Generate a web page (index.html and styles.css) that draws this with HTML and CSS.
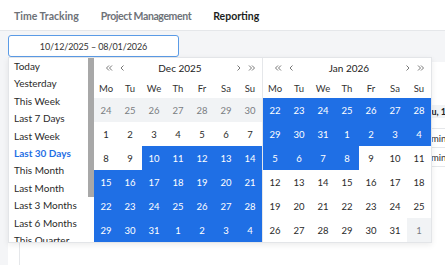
FILE: index.html
```html
<!DOCTYPE html>
<html lang="en">
<head>
<meta charset="utf-8">
<title>Reporting</title>
<link rel="stylesheet" href="styles.css">
</head>
<body>
<nav class="tabs">
  <span class="tab">Time Tracking</span>
  <span class="tab tab-wide">Project Management</span>
  <span class="tab active">Reporting</span>
</nav>
<main class="content">
  <div class="picker">
    <div class="date-input">10/12/2025 – 08/01/2026</div>
    <div class="dropdown">
      <div class="presets">
        <div class="preset">Today</div>
        <div class="preset">Yesterday</div>
        <div class="preset">This Week</div>
        <div class="preset">Last 7 Days</div>
        <div class="preset">Last Week</div>
        <div class="preset selected">Last 30 Days</div>
        <div class="preset">This Month</div>
        <div class="preset">Last Month</div>
        <div class="preset">Last 3 Months</div>
        <div class="preset">Last 6 Months</div>
        <div class="preset">This Quarter</div>
      </div>
      <div class="scrollbar"><div class="thumb"></div></div>
      <div class="calendar">
        <div class="cal-head">
          <span class="nav-btn"><svg width="8" height="8" viewBox="0 0 8 8"><path d="M4 1.5 1.5 4 4 6.5M7 1.5 4.5 4 7 6.5" fill="none" stroke="#777" stroke-width="1"/></svg></span>
          <span class="nav-btn"><svg width="8" height="8" viewBox="0 0 8 8"><path d="M5.5 1.5 3 4 5.5 6.5" fill="none" stroke="#777" stroke-width="1"/></svg></span>
          <span class="cal-title">Dec 2025</span>
          <span class="nav-btn"><svg width="8" height="8" viewBox="0 0 8 8"><path d="M2.5 1.5 5 4 2.5 6.5" fill="none" stroke="#777" stroke-width="1"/></svg></span>
          <span class="nav-btn"><svg width="8" height="8" viewBox="0 0 8 8"><path d="M1 1.5 3.5 4 1 6.5M4 1.5 6.5 4 4 6.5" fill="none" stroke="#777" stroke-width="1"/></svg></span>
        </div>
        <div class="grid">
          <span class="wd">Mo</span><span class="wd">Tu</span><span class="wd">We</span><span class="wd">Th</span><span class="wd">Fr</span><span class="wd">Sa</span><span class="wd">Su</span>
          <span class="day muted">24</span><span class="day muted">25</span><span class="day muted">26</span><span class="day muted">27</span><span class="day muted">28</span><span class="day muted">29</span><span class="day muted">30</span>
          <span class="day">1</span><span class="day">2</span><span class="day">3</span><span class="day">4</span><span class="day">5</span><span class="day">6</span><span class="day">7</span>
          <span class="day">8</span><span class="day">9</span><span class="day range">10</span><span class="day range">11</span><span class="day range">12</span><span class="day range">13</span><span class="day range">14</span>
          <span class="day range">15</span><span class="day range">16</span><span class="day range">17</span><span class="day range">18</span><span class="day range">19</span><span class="day range">20</span><span class="day range">21</span>
          <span class="day range">22</span><span class="day range">23</span><span class="day range">24</span><span class="day range">25</span><span class="day range">26</span><span class="day range">27</span><span class="day range">28</span>
          <span class="day range">29</span><span class="day range">30</span><span class="day range">31</span><span class="day range">1</span><span class="day range">2</span><span class="day range">3</span><span class="day range">4</span>
        </div>
      </div>
      <div class="calendar second">
        <div class="cal-head">
          <span class="nav-btn"><svg width="8" height="8" viewBox="0 0 8 8"><path d="M4 1.5 1.5 4 4 6.5M7 1.5 4.5 4 7 6.5" fill="none" stroke="#777" stroke-width="1"/></svg></span>
          <span class="nav-btn"><svg width="8" height="8" viewBox="0 0 8 8"><path d="M5.5 1.5 3 4 5.5 6.5" fill="none" stroke="#777" stroke-width="1"/></svg></span>
          <span class="cal-title">Jan 2026</span>
          <span class="nav-btn"><svg width="8" height="8" viewBox="0 0 8 8"><path d="M2.5 1.5 5 4 2.5 6.5" fill="none" stroke="#777" stroke-width="1"/></svg></span>
          <span class="nav-btn"><svg width="8" height="8" viewBox="0 0 8 8"><path d="M1 1.5 3.5 4 1 6.5M4 1.5 6.5 4 4 6.5" fill="none" stroke="#777" stroke-width="1"/></svg></span>
        </div>
        <div class="grid">
          <span class="wd">Mo</span><span class="wd">Tu</span><span class="wd">We</span><span class="wd">Th</span><span class="wd">Fr</span><span class="wd">Sa</span><span class="wd">Su</span>
          <span class="day range">22</span><span class="day range">23</span><span class="day range">24</span><span class="day range">25</span><span class="day range">26</span><span class="day range">27</span><span class="day range">28</span>
          <span class="day range">29</span><span class="day range">30</span><span class="day range">31</span><span class="day range">1</span><span class="day range">2</span><span class="day range">3</span><span class="day range">4</span>
          <span class="day range">5</span><span class="day range">6</span><span class="day range">7</span><span class="day range">8</span><span class="day">9</span><span class="day">10</span><span class="day">11</span>
          <span class="day">12</span><span class="day">13</span><span class="day">14</span><span class="day">15</span><span class="day">16</span><span class="day">17</span><span class="day">18</span>
          <span class="day">19</span><span class="day">20</span><span class="day">21</span><span class="day">22</span><span class="day">23</span><span class="day">24</span><span class="day">25</span>
          <span class="day">26</span><span class="day">27</span><span class="day">28</span><span class="day">29</span><span class="day">30</span><span class="day">31</span><span class="day muted">1</span>
        </div>
      </div>
    </div>
  </div>
  <section class="card">
    <div class="report">
      <div class="rep-head">Thu, 1</div>
      <div class="rep-sub"></div>
      <div class="rep-row">0 min</div>
      <div class="rep-row">0 min</div>
    </div>
    <div class="card-foot"></div>
  </section>
</main>
</body>
</html>
```

FILE: styles.css
```css
* { box-sizing: border-box; }

html, body {
  margin: 0;
  width: 445px;
  height: 265px;
  overflow: hidden;
}

body {
  background: #f4f5f7;
  font-family: Lato, "Noto Sans", sans-serif;
  color: #222;
}

.tabs {
  height: 31px;
  background: #fff;
  border-bottom: 1px solid #e5e7ea;
  display: flex;
  align-items: center;
  gap: 22px;
  padding: 1px 0 0 14px;
  font-size: 10.5px;
  font-weight: 700;
  color: #6e7278;
}

.tab-wide {
  letter-spacing: -0.4px;
}

.tab.active {
  color: #1d1f22;
}

.content {
  padding: 4px 8px 0;
  display: flex;
  flex-direction: column;
  gap: 5px;
}

.picker {
  position: relative;
  width: 171px;
  z-index: 2;
}

.date-input {
  height: 22px;
  border: 1px solid #5b9be6;
  border-radius: 3px;
  background: #fff;
  display: flex;
  align-items: center;
  justify-content: center;
  font-size: 9px;
  letter-spacing: -0.1px;
  color: #333;
}

.dropdown {
  position: absolute;
  top: 22px;
  left: 0;
  width: 424px;
  height: 186px;
  display: flex;
  background: #fff;
  border: 1px solid #e3e5e8;
  box-shadow: 0 2px 6px rgba(0, 0, 0, 0.08);
}

.presets {
  width: 79px;
  height: 100%;
  overflow: hidden;
  flex: none;
}

.preset {
  height: 17.4px;
  line-height: 17.4px;
  padding-left: 5px;
  font-size: 10px;
  color: #2a2a2a;
  white-space: nowrap;
}

.preset.selected {
  color: #1f6fe5;
  font-weight: 700;
}

.scrollbar {
  width: 6px;
  flex: none;
  background: #fff;
}

.thumb {
  height: 139px;
  background: #a8a8a8;
}

.calendar {
  width: 168px;
  flex: none;
}

.calendar.second {
  width: 169px;
  border-left: 1px solid #e5e7ea;
}

.cal-head {
  height: 20px;
  display: flex;
  align-items: center;
  padding: 0 4px 0 8px;
}

.nav-btn {
  width: 13px;
  display: flex;
  justify-content: center;
  align-items: center;
}

.cal-title {
  flex: 1;
  text-align: center;
  font-size: 10px;
  color: #222;
}

.grid {
  display: grid;
  grid-template-columns: repeat(7, 24px);
  grid-template-rows: 20px repeat(6, 24px);
}

.wd {
  display: flex;
  align-items: center;
  justify-content: center;
  font-size: 9.5px;
  color: #333;
}

.day {
  display: flex;
  align-items: center;
  justify-content: center;
  font-size: 9.5px;
  color: #2a2a2a;
  background: #fff;
}

.day.muted {
  background: #f1f3f5;
  color: #7a7d82;
}

.day.range {
  background: #1f6fe5;
  color: #fff;
}

.card {
  background: #fff;
  margin-right: -8px;
  height: 220px;
  padding-top: 43px;
  display: flex;
  flex-direction: column;
}

.report {
  margin-left: 409px;
  font-size: 9.5px;
}

.rep-head {
  height: 13px;
  line-height: 13px;
  padding-left: 4px;
  font-size: 9px;
  background: #f1f3f5;
  font-weight: 700;
  white-space: nowrap;
}

.rep-sub {
  height: 11px;
  border-bottom: 1px solid #e5e7ea;
}

.rep-row {
  height: 19px;
  line-height: 19px;
  padding-left: 6px;
  white-space: nowrap;
  color: #333;
  border-bottom: 1px solid #e5e7ea;
}

.card-foot {
  flex: 1;
  margin-left: 11px;
  border-left: 1px solid #e5e7ea;
}
```
